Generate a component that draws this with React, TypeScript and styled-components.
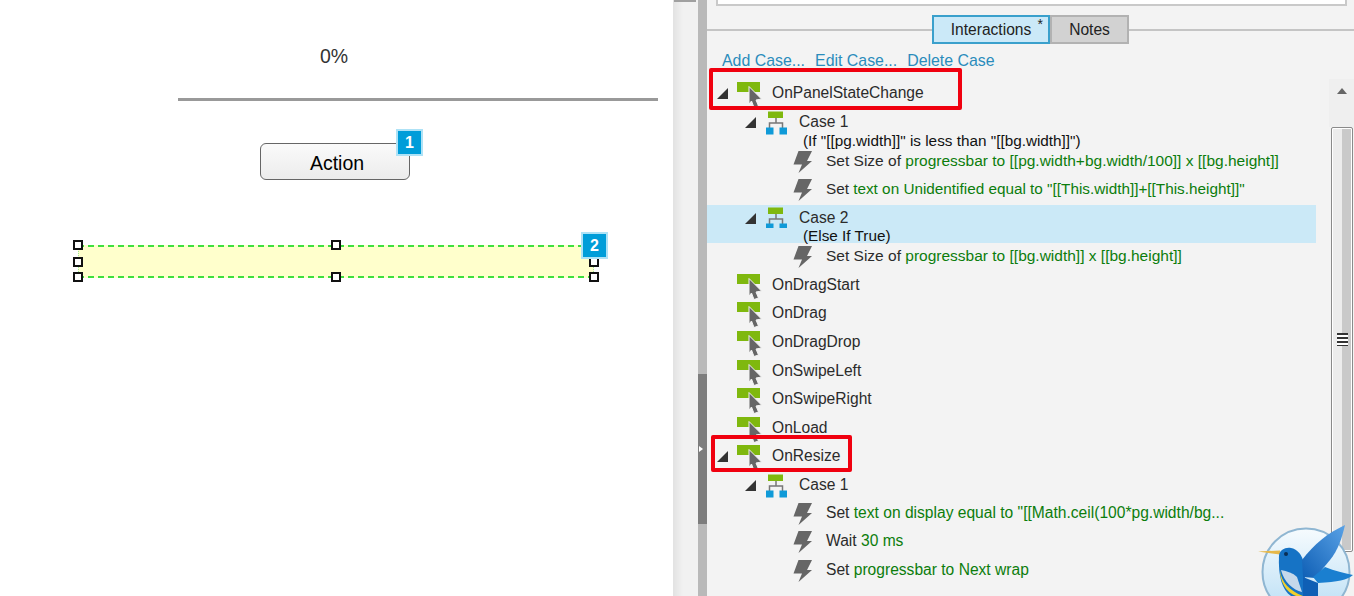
import React from "react";
import styled, { createGlobalStyle } from "styled-components";

const GlobalStyle = createGlobalStyle`
  html, body {
    margin: 0;
    padding: 0;
    overflow: hidden;
  }
  body {
    font-family: "Liberation Sans", Arial, sans-serif;
  }
`;

const Page = styled.div`
  width: 1354px;
  height: 596px;
  display: flex;
  overflow: hidden;
  background: #fff;
`;

const Canvas = styled.div`
  width: 673px;
  flex: none;
  position: relative;
  background: #fff;
  display: flex;
  flex-direction: column;
`;

const Percent = styled.div`
  margin: 45px 0 0 320px;
  height: 22px;
  font-size: 19.5px;
  line-height: 22px;
  color: #333;
`;

const Rule = styled.div`
  margin: 31px 0 0 178px;
  width: 480px;
  height: 3px;
  background: #999;
`;

const ActionWrap = styled.div`
  margin: 42px 0 0 260px;
  width: 150px;
  position: relative;
`;

const ActionButton = styled.div`
  box-sizing: border-box;
  width: 150px;
  height: 37px;
  padding-left: 4px;
  border: 1px solid #666;
  border-radius: 6px;
  background: linear-gradient(#fafafa, #ececec);
  font-size: 19.5px;
  line-height: 38px;
  text-align: center;
  color: #000;
`;

const Badge = styled.div<{ $right: number; $top: number }>`
  position: absolute;
  right: ${(p) => p.$right}px;
  top: ${(p) => p.$top}px;
  box-sizing: border-box;
  width: 27px;
  height: 27px;
  background: #009dd9;
  border: 2px solid #aee2f6;
  color: #fff;
  font-weight: bold;
  font-size: 16px;
  line-height: 23px;
  text-align: center;
`;

const Selection = styled.div`
  box-sizing: border-box;
  margin: 65px 0 0 78px;
  width: 516px;
  height: 33px;
  position: relative;
  background: #ffffcc;
  border-top: 2px dashed #3ee03e;
  border-bottom: 2px dashed #3ee03e;
  border-left: 1px dotted #9ae89a;
  border-right: 1px dotted #9ae89a;
`;

const Handle = styled.span<{ $x: number; $y: number }>`
  position: absolute;
  left: ${(p) => p.$x}px;
  top: ${(p) => p.$y}px;
  box-sizing: border-box;
  width: 10px;
  height: 10px;
  background: #fff;
  border: 2px solid #111;
`;

const Gutter = styled.div`
  width: 25px;
  flex: none;
  position: relative;
  background: linear-gradient(90deg, #e2e2e2, #f1f1f1 40%);
`;

const GutterThumb = styled.div`
  margin-left: 1px;
  width: 22px;
  height: 2px;
  background: #a0a0a0;
`;

const Splitter = styled.div`
  width: 9px;
  flex: none;
  position: relative;
  background: #b9b9b9;
  display: flex;
  flex-direction: column;
`;

const SplitterGrip = styled.div`
  margin-top: 374px;
  height: 150px;
  background: #7d7d7d;
  position: relative;

  &::after {
    content: "";
    position: absolute;
    left: 1px;
    top: 72px;
    border-left: 4px solid #fff;
    border-top: 3px solid transparent;
    border-bottom: 3px solid transparent;
  }
`;

const Panel = styled.div`
  flex: 1;
  position: relative;
  background: #f3f3f3;
  display: flex;
  flex-direction: column;
`;

const TopBox = styled.div`
  box-sizing: border-box;
  margin: 0 7px 0 9px;
  height: 6px;
  background: #fff;
  border: 2px solid #c9c9c9;
  border-top: none;
`;

const TabBar = styled.div`
  margin-top: 9px;
  height: 29px;
  display: flex;
  padding-left: 225px;
  position: relative;

  &::before {
    content: "";
    position: absolute;
    left: 0;
    right: 0;
    top: 14px;
    height: 2px;
    background: #c4c4c4;
  }
`;

const Tab = styled.div<{ $active?: boolean }>`
  box-sizing: border-box;
  position: relative;
  height: 29px;
  width: ${(p) => (p.$active ? 118 : 79)}px;
  border: 2px solid ${(p) => (p.$active ? "#3aa0cc" : "#b2b2b2")};
  background: ${(p) => (p.$active ? "#cbe9f8" : "#d2d2d2")};
  font-size: 15.6px;
  line-height: 26px;
  text-align: center;
  color: #222;
`;

const Star = styled.span`
  position: absolute;
  top: 0;
  right: 5px;
  font-size: 14px;
  line-height: 14px;
`;

const Toolbar = styled.div`
  margin: 7px 0 0 15px;
  height: 20px;
  display: flex;
  gap: 10px;
  font-size: 15.9px;
  line-height: 20px;
  color: #2a8cbc;
`;

const Tree = styled.div`
  margin-top: 9px;
  display: flex;
  flex-direction: column;
`;

const Row = styled.div<{ $h: number; $indent: number; $hl?: boolean }>`
  height: ${(p) => p.$h}px;
  width: 609px;
  padding-left: ${(p) => p.$indent}px;
  box-sizing: border-box;
  display: flex;
  align-items: flex-start;
  background: ${(p) => (p.$hl ? "#cbe9f7" : "transparent")};
  font-size: 15.6px;
  line-height: 20px;
  color: #2b2b2b;
  white-space: nowrap;
`;

const Arrow = styled.span`
  width: 0;
  height: 0;
  flex: none;
  margin: 8px 9px 0 0;
  border-left: 11px solid transparent;
  border-bottom: 11px solid #333;
`;

const Label = styled.span<{ $gap: number; $top: number; $size?: number }>`
  margin-left: ${(p) => p.$gap}px;
  margin-top: ${(p) => p.$top}px;
  font-size: ${(p) => p.$size ?? 15.6}px;
`;

const Condition = styled.span`
  margin-top: -2px;
  font-size: 15.3px;
  color: #111;
`;

const Green = styled.span`
  color: #0c7d0c;
`;

const Outline = styled.div<{ $w: number; $h: number; $x: number; $y: number }>`
  position: absolute;
  left: ${(p) => p.$x}px;
  top: ${(p) => p.$y}px;
  box-sizing: border-box;
  width: ${(p) => p.$w}px;
  height: ${(p) => p.$h}px;
  border: 4px solid #f0000f;
  border-radius: 2px;
  pointer-events: none;
`;

const ScrollTrack = styled.div`
  position: absolute;
  left: 622px;
  top: 79px;
  width: 25px;
  display: flex;
  flex-direction: column;
  align-items: center;
`;

const ScrollButton = styled.div`
  width: 25px;
  height: 48px;
  flex: none;
  background: #efefef;
  display: flex;
  justify-content: center;
  align-items: flex-start;
`;

const ScrollUp = styled.span`
  margin-top: 9px;
  width: 0;
  height: 0;
  border-left: 5px solid transparent;
  border-right: 5px solid transparent;
  border-bottom: 6px solid #666;
`;

const ScrollThumb = styled.div`
  box-sizing: border-box;
  width: 22px;
  height: 425px;
  border: 1px solid #8a8a8a;
  border-radius: 2px;
  background: linear-gradient(90deg, #ececec 0 50%, #c9c9c9 50% 100%);
  box-shadow: inset 0 0 0 1px #fff;
  position: relative;
`;

const ScrollGrip = styled.span`
  position: absolute;
  left: 5px;
  top: 205px;
  width: 11px;
  height: 13px;
  background: repeating-linear-gradient(#333 0 2px, #fff 2px 4px);
`;

const LogoWrap = styled.div`
  position: absolute;
  right: 0;
  bottom: 0;
  width: 98px;
  height: 72px;
`;

const EventIcon = () => (
  <svg width="26" height="28" viewBox="0 0 26 28" style={{ flex: "none" }}>
    <path d="M0 2h23v10h-23z" fill="#7fb80e" />
    <path
      d="M12 6.500l12.500 12.500-5.500 1 2.500 6-4.500 1.500-2.500-6.500-2.500 3z"
      fill="#666"
      stroke="#f3f3f3"
      strokeWidth="1"
    />
  </svg>
);

const CaseIcon = () => (
  <svg width="23" height="26" viewBox="0 0 23 26" style={{ flex: "none" }}>
    <path d="M3 2.500h15v6.500h-15z" fill="#7fb80e" />
    <path d="M11 9v5M4.500 19v-5h13v5" fill="none" stroke="#777" strokeWidth="1.500" />
    <path d="M1 18.500h7.500v7h-7.500zM14.500 18.500h7.500v7h-7.500z" fill="#0f9ad8" />
  </svg>
);

const BoltIcon = () => (
  <svg width="20" height="26" viewBox="0 0 20 26" style={{ flex: "none" }}>
    <path d="M5.500 3h13.500l-5 10h5l-13.500 12 3.500-8.500h-8.500z" fill="#666" />
  </svg>
);

const Bird = () => (
  <svg width="98" height="72" viewBox="0 0 98 72">
    <defs>
      <linearGradient id="disc" x1="0" y1="0" x2="0" y2="1">
        <stop offset="0" stopColor="#f6fbfe" />
        <stop offset="1" stopColor="#b9def5" />
      </linearGradient>
      <linearGradient id="wing" x1="1" y1="0" x2="0" y2="1">
        <stop offset="0" stopColor="#5aa2e6" />
        <stop offset="1" stopColor="#0f5fb5" />
      </linearGradient>
    </defs>
    <circle cx="50" cy="48" r="43.500" fill="url(#disc)" stroke="#8fb6d2" strokeWidth="2" />
    <path d="M2 27.500l22-1v4z" fill="#e6b84a" />
    <path d="M23 31c1-5 6-8 12-7 6 1 10 6 12 12l2 18-2 18h-12c-9-6-13-20-12-41z" fill="#1673c5" />
    <path d="M24 46c1 12 10 21 23 26h-7c-10-4-16-14-16-26z" fill="#f0cf2c" />
    <path d="M25 46c6 1 12 3 16 7l5 15c-9-2-18-10-21-22z" fill="#c5d8ea" />
    <path d="M46 36c12-16 26-27 43-35-3 13-7 25-15 35l-15 18-12-1z" fill="url(#wing)" />
    <path d="M57 53l12-10c10 4 19 6 28 8-6 5-15 7-35 8z" fill="#1a7fd0" />
    <path d="M47 53l15 6v13h-15z" fill="#0f5fb5" />
    <circle cx="30" cy="30" r="2" fill="#0a2f55" />
  </svg>
);

const Event = ({ name, expand }: { name: string; expand?: boolean }) => (
  <Row $h={28.6} $indent={expand ? 10 : 30}>
    {expand && <Arrow />}
    <EventIcon />
    <Label $gap={9} $top={3}>
      {name}
    </Label>
  </Row>
);

const CaseRow = ({ name, hl, h }: { name: string; hl?: boolean; h: number }) => (
  <Row $h={h} $indent={38} $hl={hl}>
    <Arrow />
    <CaseIcon />
    <Label $gap={11} $top={3}>
      {name}
    </Label>
  </Row>
);

const ConditionRow = ({ hl, children }: { hl?: boolean; children: React.ReactNode }) => (
  <Row $h={15} $indent={96} $hl={hl}>
    <Condition>{children}</Condition>
  </Row>
);

const ActionRow = ({ size, children }: { size?: number; children: React.ReactNode }) => (
  <Row $h={28.5} $indent={86}>
    <BoltIcon />
    <Label $gap={13} $top={3} $size={size}>
      {children}
    </Label>
  </Row>
);

export default function App() {
  return (
    <Page>
      <GlobalStyle />
      <Canvas>
        <Percent>0%</Percent>
        <Rule />
        <ActionWrap>
          <ActionButton>Action</ActionButton>
          <Badge $right={-13} $top={-14}>1</Badge>
        </ActionWrap>
        <Selection>
          <Handle $x={-6} $y={-7} />
          <Handle $x={-6} $y={10} />
          <Handle $x={-6} $y={25} />
          <Handle $x={252} $y={-7} />
          <Handle $x={252} $y={25} />
          <Handle $x={510} $y={-7} />
          <Handle $x={510} $y={10} />
          <Handle $x={510} $y={25} />
          <Badge $right={-15} $top={-15}>2</Badge>
        </Selection>
      </Canvas>
      <Gutter>
        <GutterThumb />
      </Gutter>
      <Splitter>
        <SplitterGrip />
      </Splitter>
      <Panel>
        <TopBox />
        <TabBar>
          <Tab $active>
            Interactions<Star>*</Star>
          </Tab>
          <Tab>Notes</Tab>
        </TabBar>
        <Toolbar>
          <span>Add Case...</span>
          <span>Edit Case...</span>
          <span>Delete Case</span>
        </Toolbar>
        <Tree>
          <Event name="OnPanelStateChange" expand />
          <CaseRow name="Case 1" h={24} />
          <ConditionRow>(If "[[pg.width]]" is less than "[[bg.width]]")</ConditionRow>
          <ActionRow size={15.5}>
            Set Size of <Green>progressbar to [[pg.width+bg.width/100]] x [[bg.height]]</Green>
          </ActionRow>
          <ActionRow size={15.3}>
            Set <Green>text on Unidentified equal to "[[This.width]]+[[This.height]]"</Green>
          </ActionRow>
          <CaseRow name="Case 2" hl h={23.7} />
          <ConditionRow hl>(Else If True)</ConditionRow>
          <ActionRow size={15.5}>
            Set Size of <Green>progressbar to [[bg.width]] x [[bg.height]]</Green>
          </ActionRow>
          <Event name="OnDragStart" />
          <Event name="OnDrag" />
          <Event name="OnDragDrop" />
          <Event name="OnSwipeLeft" />
          <Event name="OnSwipeRight" />
          <Event name="OnLoad" />
          <Event name="OnResize" expand />
          <CaseRow name="Case 1" h={28} />
          <ActionRow>
            Set <Green>text on display equal to "[[Math.ceil(100*pg.width/bg...</Green>
          </ActionRow>
          <ActionRow>
            Wait <Green>30 ms</Green>
          </ActionRow>
          <ActionRow>
            Set <Green>progressbar to Next wrap</Green>
          </ActionRow>
        </Tree>
        <Outline $w={253} $h={42} $x={2} $y={68} />
        <Outline $w={141} $h={37} $x={4} $y={435} />
        <ScrollTrack>
          <ScrollButton>
            <ScrollUp />
          </ScrollButton>
          <ScrollThumb>
            <ScrollGrip />
          </ScrollThumb>
        </ScrollTrack>
        <LogoWrap>
          <Bird />
        </LogoWrap>
      </Panel>
    </Page>
  );
}
